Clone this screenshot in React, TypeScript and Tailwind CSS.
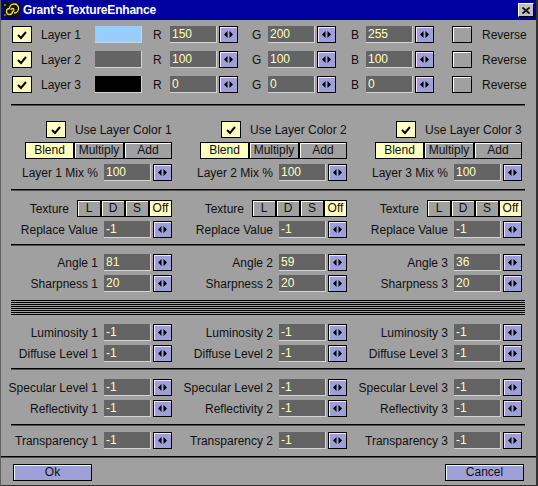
import React from 'react';

const layers = [
  { n: 1, swatch: 'bg-[#99ccff]', r: '150', g: '200', b: '255' },
  { n: 2, swatch: 'bg-[#646464]', r: '100', g: '100', b: '100' },
  { n: 3, swatch: 'bg-black', r: '0', g: '0', b: '0' },
];

function Spin() {
  return (
    <div className="w-[19px] h-[17px] shrink-0 bg-[#a0a0d8] border border-black shadow-[inset_1px_1px_0_#f4e0ff] flex items-center justify-center">
      <svg width="9" height="7" viewBox="0 0 9 7">
        <polygon points="0,3.5 3.5,0 3.5,7" fill="black" />
        <polygon points="5.5,0 9,3.5 5.5,7" fill="black" />
      </svg>
    </div>
  );
}

function Num({ value }: { value: string }) {
  return (
    <div className="w-[47px] h-[17px] shrink-0 bg-[#646464] border-r border-b border-[#d4d4d4] text-[#ffffc0] pl-[2px] leading-[16px]">
      {value}
    </div>
  );
}

function NumSpin({ value }: { value: string }) {
  return (
    <div className="flex items-center gap-[2px]">
      <Num value={value} />
      <Spin />
    </div>
  );
}

function Check({ on }: { on: boolean }) {
  return (
    <div
      className={
        'w-[20px] h-[17px] shrink-0 border border-black flex items-center justify-center ' +
        (on ? 'bg-[#ffffc0]' : 'bg-[#a0a0a0] shadow-[inset_1px_1px_0_#fffff0]')
      }
    >
      {on && (
        <svg width="12" height="10" viewBox="0 0 12 10">
          <polyline points="2,5 5,8 10,2" fill="none" stroke="black" strokeWidth="2" />
        </svg>
      )}
    </div>
  );
}

function Btn({ label, on, w }: { label: string; on?: boolean; w: string }) {
  return (
    <div
      className={
        w +
        ' h-[17px] border border-black text-center leading-[15px] ' +
        (on ? 'bg-[#ffffc0]' : 'bg-[#a0a0a0] shadow-[inset_1px_1px_0_#fffff0]')
      }
    >
      {label}
    </div>
  );
}

function Field({ label, value }: { label: string; value: string }) {
  return (
    <div className="w-[175px] h-[17px] flex items-center">
      <span className="w-[97px] text-right whitespace-nowrap">{label}</span>
      <div className="ml-[6px]">
        <NumSpin value={value} />
      </div>
    </div>
  );
}

function FieldRow({ mt, label, values }: { mt: string; label: string; values: string[] }) {
  return (
    <div className={mt + ' flex'}>
      {values.map((v, i) => (
        <Field key={i} label={`${label} ${i + 1}`} value={v} />
      ))}
    </div>
  );
}

function Sep({ mt }: { mt: string }) {
  return (
    <div className={mt + ' mx-[10px] w-[514px] h-[2px] border-t border-black border-b border-b-[#505050]'} />
  );
}

function Logo() {
  return (
    <svg width="16" height="16" viewBox="0 0 16 16">
      <rect width="16" height="16" fill="#101010" />
      <path
        d="M8 8 m0 0 a1.5 1.5 0 1 1 1.5 1.5 a3 3 0 1 1 -3 -3 a4.5 4.5 0 1 1 4.5 4.5"
        fill="none"
        stroke="#f0e040"
        strokeWidth="1.3"
      />
      <circle cx="2" cy="3" r="0.8" fill="#f0e040" />
      <circle cx="13" cy="2" r="0.8" fill="#f0e040" />
      <circle cx="2" cy="13" r="0.8" fill="#f0e040" />
    </svg>
  );
}

export default function App() {
  return (
    <div className="w-[538px] h-[486px] bg-[#a0a0a0] flex flex-col font-['Liberation_Sans',Arial,sans-serif] text-[12px] text-[#101010] overflow-hidden border-l border-l-[#606060] border-r-2 border-r-[#303030] border-b border-b-[#303030]">
      {/* title bar */}
      <div className="h-[20px] shrink-0 bg-[#0000a0] flex items-center pl-[2px] pr-[2px]">
        <Logo />
        <span className="ml-[4px] text-white font-bold text-[12px] tracking-[-0.2px]">Grant's TextureEnhance</span>
        <div className="ml-auto w-[16px] h-[14px] bg-[#c0c0c0] border-t border-l border-white border-r border-b border-r-black border-b-black flex items-center justify-center">
          <svg width="8" height="7" viewBox="0 0 8 7">
            <path d="M0.5 0.5 L7.5 6.5 M7.5 0.5 L0.5 6.5" stroke="black" strokeWidth="1.6" />
          </svg>
        </div>
      </div>

      {/* layer rows */}
      <div className="mt-[6px] flex flex-col gap-[8px]">
        {layers.map((l) => (
          <div key={l.n} className="h-[17px] flex items-center pl-[11px]">
            <Check on />
            <span className="w-[63px] pl-[9px]">Layer {l.n}</span>
            <div className={l.swatch + ' w-[47px] h-[17px] border-r border-b border-[#d4d4d4]'} />
            <span className="w-[28px] pl-[11px]">R</span>
            <NumSpin value={l.r} />
            <span className="w-[30px] pl-[14px]">G</span>
            <NumSpin value={l.g} />
            <span className="w-[30px] pl-[15px]">B</span>
            <NumSpin value={l.b} />
            <div className="ml-[18px]">
              <Check on={false} />
            </div>
            <span className="ml-[10px]">Reverse</span>
          </div>
        ))}
      </div>

      <Sep mt="mt-[11px]" />

      {/* layer color */}
      <div className="mt-[15px] flex">
        {[1, 2, 3].map((n) => (
          <div key={n} className="w-[175px] h-[17px] flex items-center pl-[45px]">
            <Check on />
            <span className="ml-[9px] whitespace-nowrap">Use Layer Color {n}</span>
          </div>
        ))}
      </div>
      <div className="mt-[4px] flex">
        {[1, 2, 3].map((n) => (
          <div key={n} className="w-[175px] flex pl-[24px]">
            <Btn label="Blend" on w="w-[49px]" />
            <Btn label="Multiply" w="w-[50px]" />
            <Btn label="Add" w="w-[48px]" />
          </div>
        ))}
      </div>
      <div className="mt-[5px] flex">
        {[1, 2, 3].map((n) => (
          <Field key={n} label={`Layer ${n} Mix %`} value="100" />
        ))}
      </div>

      <Sep mt="mt-[8px]" />

      {/* texture */}
      <div className="mt-[9px] flex">
        {[1, 2, 3].map((n) => (
          <div key={n} className="w-[175px] h-[17px] flex items-center">
            <span className="w-[68px] text-right">Texture</span>
            <div className="ml-[8px] flex">
              <Btn label="L" w="w-[24px]" />
              <Btn label="D" w="w-[24px]" />
              <Btn label="S" w="w-[24px]" />
              <Btn label="Off" on w="w-[23px]" />
            </div>
          </div>
        ))}
      </div>
      <div className="mt-[4px] flex">
        {[1, 2, 3].map((n) => (
          <Field key={n} label="Replace Value" value="-1" />
        ))}
      </div>

      <Sep mt="mt-[6px]" />

      <FieldRow mt="mt-[8px]" label="Angle" values={['81', '59', '36']} />
      <FieldRow mt="mt-[4px]" label="Sharpness" values={['20', '20', '20']} />

      {/* striped divider */}
      <div className="mt-[8px] mx-[10px] w-[514px] h-[16px] bg-[repeating-linear-gradient(to_bottom,#000_0px,#000_1px,#a0a0a0_1px,#a0a0a0_2px)]" />

      <FieldRow mt="mt-[8px]" label="Luminosity" values={['-1', '-1', '-1']} />
      <FieldRow mt="mt-[4px]" label="Diffuse Level" values={['-1', '-1', '-1']} />

      <Sep mt="mt-[6px]" />

      <FieldRow mt="mt-[9px]" label="Specular Level" values={['-1', '-1', '-1']} />
      <FieldRow mt="mt-[4px]" label="Reflectivity" values={['-1', '-1', '-1']} />

      <Sep mt="mt-[7px]" />

      <FieldRow mt="mt-[6px]" label="Transparency" values={['-1', '-1', '-1']} />

      <div className="mt-[7px] w-full h-[2px] border-t border-black border-b border-b-[#505050]" />

      {/* footer buttons */}
      <div className="mt-[6px] flex px-[12px] justify-between">
        <div className="w-[79px] h-[17px] bg-[#a0a0d8] border border-black shadow-[inset_1px_1px_0_#e0ffff] text-center leading-[15px]">
          Ok
        </div>
        <div className="w-[79px] h-[17px] bg-[#a0a0d8] border border-black shadow-[inset_1px_1px_0_#e0ffff] text-center leading-[15px]">
          Cancel
        </div>
      </div>
    </div>
  );
}
